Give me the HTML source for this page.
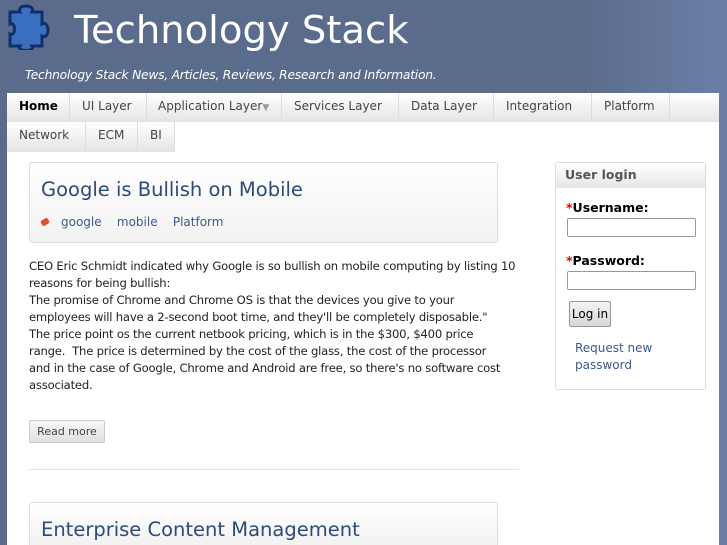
<!DOCTYPE html>
<html style="height:545px;overflow:hidden"><head><style>
body{margin:0;width:727px;height:545px;overflow:hidden;background:linear-gradient(90deg,#5a6b8b 0%,#5b6c8c 80%,#6b7fa6 100%);font-family:"DejaVu Sans",sans-serif;position:relative}
.hdr{position:absolute;left:0;top:0;width:727px;height:93px}
.title{position:absolute;left:74px;top:8px;font-size:38.5px;color:#fff;white-space:nowrap}
.slogan{position:absolute;left:25px;top:68px;font-size:12.3px;color:#fff;font-style:italic;letter-spacing:-0.25px;white-space:nowrap}
.main{position:absolute;left:7px;top:93px;width:712px;height:452px;background:#fff;overflow:hidden}
.nav span{position:absolute;height:29px;line-height:27px;font-size:12px;color:#444;background:linear-gradient(#fff,#e4e4e4);border-right:1px solid #ddd;padding:0 12px;box-sizing:border-box;white-space:nowrap}
.box{position:absolute;border:1px solid #ddd;border-radius:3px;background:linear-gradient(#fff,#f2f2f2)}
.h2{font-size:19.5px;color:#2e4a7a;position:absolute;left:11px;top:15px;white-space:nowrap}
.tags{position:absolute;left:31px;top:52px;font-size:12px;color:#3a5a8c;white-space:nowrap}
p{margin:0;font-size:11.6px;line-height:17px;color:#222;letter-spacing:-0.2px;white-space:nowrap}
</style></head><body>
<div class="hdr">
<svg style="position:absolute;left:6px;top:2px" width="50" height="48" viewBox="0 0 50 48"><path d="M4 10h10c-4-8 16-8 12 0h10v12c8-4 8 16 0 12v10H26c4 6-16 6-12 0H4V32c6 3 6-13 0-10z" fill="#3a6fc0" stroke="#0f2f6a" stroke-width="3"/></svg>
<div class="title">Technology Stack</div>
<div class="slogan">Technology Stack News, Articles, Reviews, Research and Information.</div>
</div>
<div class="main">
<div class="nav">
<span style="left:0;width:63px;color:#000;font-weight:bold">Home</span>
<span style="left:63px;width:77px">UI Layer</span>
<span style="left:140px;width:135px;padding:0 0 0 11px">Application Layer<b style="color:#999;font-size:9px;font-weight:normal">▼</b></span>
<span style="left:275px;width:117px">Services Layer</span>
<span style="left:392px;width:95px">Data Layer</span>
<span style="left:487px;width:98px">Integration</span>
<span style="left:585px;width:78px">Platform</span>
<span style="left:663px;width:49px;border:0"></span>
<span style="left:0;top:29px;height:30px;width:79px">Network</span>
<span style="left:79px;top:29px;height:30px;width:52px">ECM</span>
<span style="left:131px;top:29px;height:30px;width:37px">BI</span>
</div>
<div class="box" style="left:22px;top:69px;width:467px;height:79px">
<div class="h2">Google is Bullish on Mobile</div>
<div style="position:absolute;left:11px;top:56px;width:8px;height:6px;background:#e05030;border-radius:2px;transform:rotate(-30deg)"></div>
<div class="tags">google &nbsp;&nbsp; mobile &nbsp;&nbsp; Platform</div>
</div>
<div style="position:absolute;left:22px;top:165px">
<p>CEO Eric Schmidt indicated why Google is so bullish on mobile computing by listing 10<br>reasons for being bullish:<br>The promise of Chrome and Chrome OS is that the devices you give to your<br>employees will have a 2-second boot time, and they'll be completely disposable."<br>The price point os the current netbook pricing, which is in the $300, $400 price<br>range.&nbsp; The price is determined by the cost of the glass, the cost of the processor<br>and in the case of Google, Chrome and Android are free, so there's no software cost<br>associated.</p>
</div>
<div style="position:absolute;left:22px;top:327px;width:74px;height:21px;border:1px solid #ccc;border-radius:2px;background:linear-gradient(#f8f8f8,#e0e0e0);font-size:11px;color:#444;text-align:center;line-height:21px">Read more</div>
<div style="position:absolute;left:22px;top:376px;width:490px;border-top:1px solid #e4e4e4"></div>
<div class="box" style="left:22px;top:409px;width:467px;height:43px;border-bottom:0;border-radius:3px 3px 0 0"><div class="h2">Enterprise Content Management</div></div>
<div style="position:absolute;left:548px;top:69px;width:149px;height:226px;border:1px solid #ddd;border-radius:3px">
<div style="height:25px;background:linear-gradient(#fff,#e6e6e6);font-size:12.5px;font-weight:bold;color:#555;line-height:24px;padding-left:9px">User login</div>
<div style="position:absolute;left:10px;top:37px;font-size:12.5px;font-weight:bold;color:#000;white-space:nowrap"><span style="color:#d00">*</span>Username:</div>
<div style="position:absolute;left:11px;top:55px;width:127px;height:17px;border:1px solid #999;border-radius:2px"></div>
<div style="position:absolute;left:10px;top:90px;font-size:12.5px;font-weight:bold;color:#000;white-space:nowrap"><span style="color:#d00">*</span>Password:</div>
<div style="position:absolute;left:11px;top:108px;width:127px;height:17px;border:1px solid #999;border-radius:2px"></div>
<div style="position:absolute;left:13px;top:138px;width:40px;height:24px;border:1px solid #999;border-radius:2px;background:linear-gradient(#f4f4f4,#d8d8d8);font-size:12px;line-height:24px;text-align:center">Log in</div>
<div style="position:absolute;left:19px;top:177px;font-size:12px;line-height:17px;color:#3a5a8c">Request new<br>password</div>
</div>
</div>
</body></html>
